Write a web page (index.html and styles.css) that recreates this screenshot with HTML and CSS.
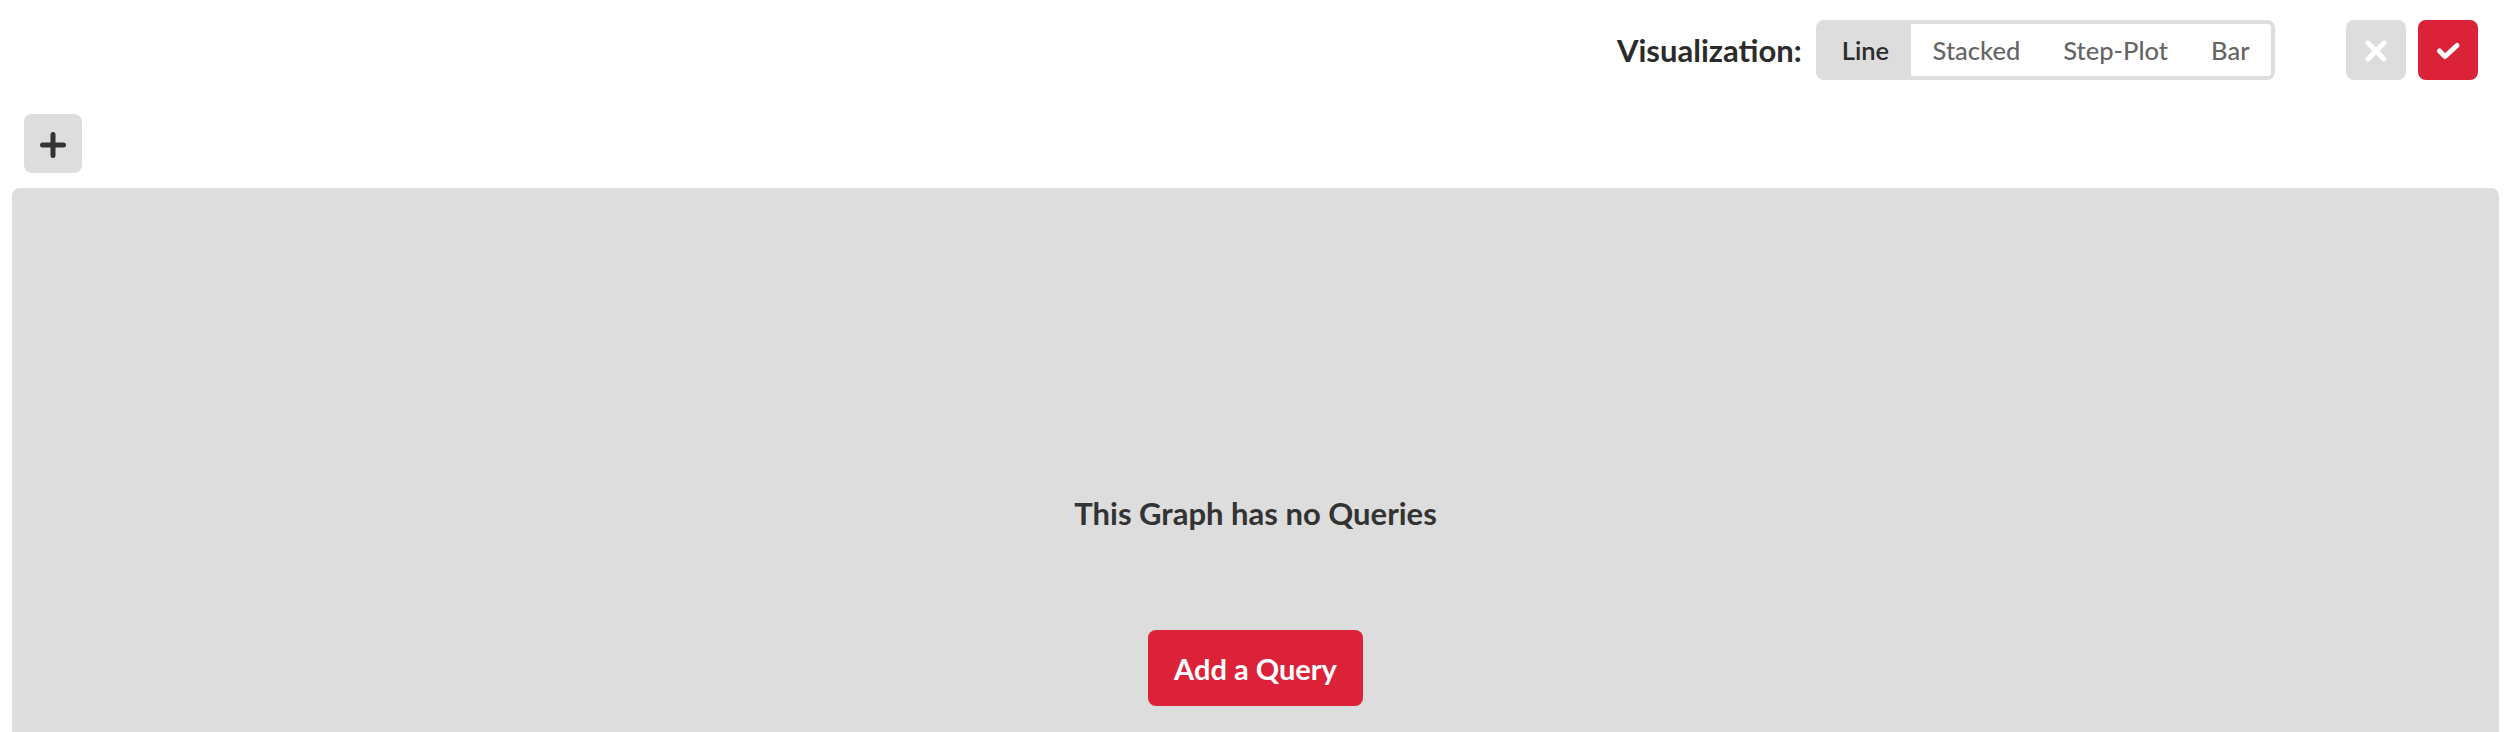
FILE: index.html
```html
<!DOCTYPE html>
<html lang="en">
<head>
<meta charset="utf-8">
<title>Graph editor</title>
<link rel="stylesheet" href="styles.css">
</head>
<body>
<header class="topbar">
  <span class="viz-label">Visualization:</span>
  <div class="toggle">
    <button class="toggle-btn active">Line</button>
    <button class="toggle-btn">Stacked</button>
    <button class="toggle-btn">Step-Plot</button>
    <button class="toggle-btn">Bar</button>
  </div>
  <div class="actions">
    <button class="icon-btn cancel" aria-label="Cancel">
      <svg width="60" height="60" viewBox="0 0 60 60"><path d="M22 23 L38 39 M38 23 L22 39" stroke="#fff" stroke-width="5" stroke-linecap="round" fill="none"/></svg>
    </button>
    <button class="icon-btn confirm" aria-label="Save">
      <svg width="60" height="60" viewBox="0 0 60 60"><path d="M21.5 31 L27 36.5 L39 25.5" stroke="#fff" stroke-width="5" stroke-linecap="round" stroke-linejoin="round" fill="none"/></svg>
    </button>
  </div>
</header>
<div class="toolbar">
  <button class="add-btn" aria-label="Add">
    <svg width="58" height="59" viewBox="0 0 58 59"><path d="M18.5 31 L39.5 31 M29 20.5 L29 41.5" stroke="#333" stroke-width="5" stroke-linecap="round" fill="none"/></svg>
  </button>
</div>
<main class="panel">
  <h2 class="empty-title">This Graph has no Queries</h2>
  <button class="primary-btn">Add a Query</button>
</main>
</body>
</html>
```
FILE: styles.css
```css
html, body {
  margin: 0;
  padding: 0;
  overflow: hidden;
  background: #fff;
}
body {
  font-family: Lato, "Open Sans", sans-serif;
  color: #333;
}
button {
  font-family: inherit;
  border: none;
  cursor: pointer;
  padding: 0;
}
.topbar {
  display: flex;
  justify-content: flex-end;
  align-items: center;
  height: 60px;
  padding: 20px 36px 0 0;
}
.viz-label {
  font-size: 31px;
  font-weight: 700;
  color: #2b2b2b;
  margin-right: 14px;
}
.toggle {
  display: flex;
  height: 60px;
  box-sizing: border-box;
  border: 4px solid #ddd;
  border-radius: 8px;
  background: #fff;
  overflow: hidden;
}
.toggle-btn {
  background: #fff;
  font-size: 25.5px;
  color: #666;
  padding: 0 21.5px;
  font-weight: 500;
}
.toggle-btn.active {
  background: #ddd;
  color: #2b2b2b;
  padding: 0 22px;
  font-weight: 600;
}
.actions {
  display: flex;
  gap: 12px;
  margin-left: 71px;
}
.icon-btn {
  width: 60px;
  height: 60px;
  border-radius: 8px;
  display: flex;
  align-items: center;
  justify-content: center;
}
.icon-btn svg { display: block; }
.cancel { background: #ddd; }
.confirm { background: #db2239; }
.toolbar {
  padding: 34px 0 0 24px;
  height: 59px;
}
.add-btn {
  width: 58px;
  height: 59px;
  background: #ddd;
  border-radius: 8px;
  display: block;
}
.add-btn svg { display: block; }
.panel {
  margin: 15px 15px 0 12px;
  height: 544px;
  background: #ddd;
  border-radius: 8px 8px 0 0;
  display: flex;
  flex-direction: column;
  align-items: center;
  padding-top: 305px;
  box-sizing: border-box;
}
.empty-title {
  margin: 0;
  font-size: 31px;
  line-height: 40px;
  font-weight: 700;
  color: #333;
}
.primary-btn {
  margin-top: 97px;
  width: 215px;
  height: 76px;
  border-radius: 8px;
  background: #db2239;
  color: #fff;
  font-size: 29px;
  font-weight: 700;
}
```
